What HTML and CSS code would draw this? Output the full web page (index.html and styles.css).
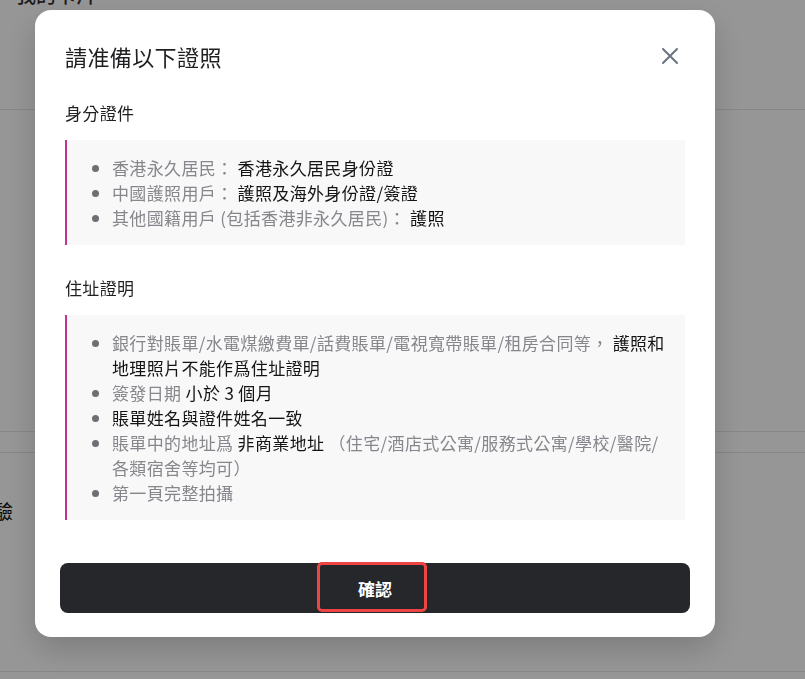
FILE: index.html
```html
<!DOCTYPE html>
<html lang="zh-Hant">
<head>
    <meta charset="UTF-8">
    <meta name="viewport" content="width=device-width, initial-scale=1.0">
    <title>請准備以下證照</title>
    <link rel="stylesheet" href="styles.css">
</head>
<body>
    <!-- page behind the dialog -->
    <div class="page">
        <div class="page-row row-head">
            <div class="page-title">我的卡片</div>
        </div>
        <div class="page-row row-tall"></div>
        <div class="page-row row-thin"></div>
        <div class="page-row row-verify">
            <span class="page-label">驗</span>
        </div>
    </div>

    <!-- dialog -->
    <div class="overlay">
        <div class="modal">
            <div class="modal-head">
                <h2>請准備以下證照</h2>
                <button class="close" aria-label="關閉">
                    <svg width="18" height="18" viewBox="0 0 18 18">
                        <path d="M2 2 L16 16 M16 2 L2 16" stroke="#6b7280" stroke-width="2" stroke-linecap="round"/>
                    </svg>
                </button>
            </div>

            <h3>身分證件</h3>
            <div class="note">
                <ul>
                    <li>香港永久居民： <span class="em">香港永久居民身份證</span></li>
                    <li>中國護照用戶： <span class="em">護照及海外身份證/簽證</span></li>
                    <li>其他國籍用戶 (包括香港非永久居民)： <span class="em">護照</span></li>
                </ul>
            </div>

            <h3>住址證明</h3>
            <div class="note">
                <ul>
                    <li>銀行對賬單/水電煤繳費單/話費賬單/電視寬帶賬單/租房合同等， <span class="em">護照和地理照片不能作爲住址證明</span></li>
                    <li>簽發日期 <span class="em">小於 3 個月</span></li>
                    <li><span class="em">賬單姓名與證件姓名一致</span></li>
                    <li>賬單中的地址爲 <span class="em">非商業地址</span> （住宅/酒店式公寓/服務式公寓/學校/醫院/各類宿舍等均可）</li>
                    <li>第一頁完整拍攝</li>
                </ul>
            </div>

            <div class="actions">
                <button class="confirm">確認</button>
                <span class="highlight"></span>
            </div>
        </div>
    </div>
</body>
</html>
```

FILE: styles.css
```css
body {
    margin: 0;
    font-family: "Noto Sans CJK TC", "Noto Sans", sans-serif;
    background: #ffffff;
    color: #1f1f22;
    overflow: hidden;
}

/* page behind */
.page-row {
    border-bottom: 1px solid #e6e6e6;
}
.row-head {
    display: flow-root;
    height: 109px;
}
.page-title {
    margin-top: -17px;
    padding-left: 16px;
    font-size: 20px;
    line-height: 24px;
    font-weight: 500;
    color: #333;
}
.row-tall {
    height: 321px;
}
.row-thin {
    height: 20px;
}
.row-verify {
    height: 218px;
    position: relative;
}
.page-label {
    position: absolute;
    left: -6px;
    top: 44px;
    font-size: 19px;
    color: #111;
}

/* dialog */
.overlay {
    position: fixed;
    inset: 0;
    background: rgba(0, 0, 0, 0.41);
}
.modal {
    width: 680px;
    box-sizing: border-box;
    margin: 10px 0 0 35px;
    padding: 30px 30px 24px;
    background: #ffffff;
    border-radius: 16px;
    box-shadow: 0 12px 32px rgba(0, 0, 0, 0.18);
}
.modal-head {
    display: flex;
    align-items: center;
    justify-content: space-between;
    margin-bottom: 29px;
}
.modal-head h2 {
    margin: 0;
    font-size: 22px;
    line-height: 32px;
    font-weight: 400;
    letter-spacing: 0.4px;
    color: #1f1f22;
}
.close {
    width: 28px;
    height: 28px;
    margin-right: 1px;
    padding: 0;
    border: none;
    background: none;
    display: flex;
    align-items: center;
    justify-content: center;
}
h3 {
    margin: 0 0 15px;
    font-size: 17px;
    line-height: 24px;
    font-weight: 400;
    letter-spacing: 0.35px;
    color: #1f1f22;
}
.note {
    background: #f8f8f9;
    border-left: 2px solid #c2338e;
    padding: 15px 16px 15px 0;
    margin-bottom: 31px;
}
.note ul {
    margin: 0;
    padding-left: 45px;
}
.note li {
    font-size: 17px;
    line-height: 25px;
    letter-spacing: 0.35px;
    color: #86868c;
}
.note li::marker {
    color: #6e6e74;
}
.em {
    color: #141416;
    font-weight: 400;
}

.actions {
    position: relative;
    margin: 43px -5px 0;
}
.confirm {
    display: block;
    width: 100%;
    height: 50px;
    border: none;
    border-radius: 8px;
    background: #26272b;
    color: #ffffff;
    font-family: inherit;
    font-size: 17px;
    font-weight: 700;
}
.highlight {
    position: absolute;
    left: 257px;
    top: -1px;
    width: 110px;
    height: 50px;
    box-sizing: border-box;
    border: 3px solid #ef4444;
    border-radius: 5px;
}
```
